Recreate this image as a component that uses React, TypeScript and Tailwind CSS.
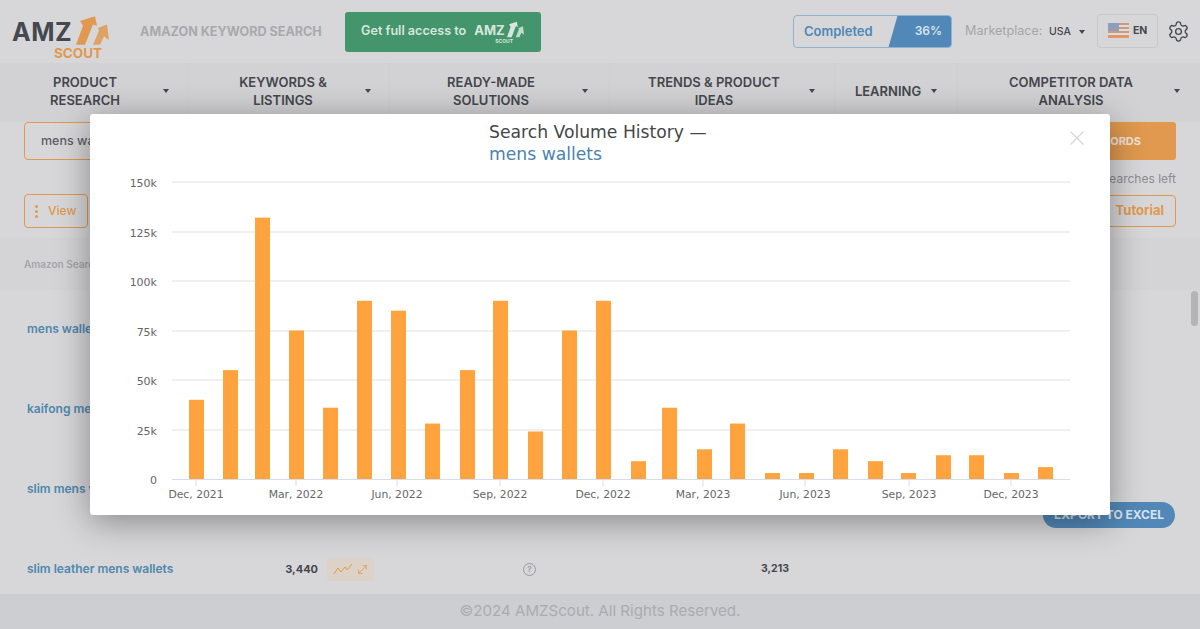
import { MoveDiagonal, Settings, X } from 'lucide-react';

type NavItem = {
  lines: string[];
  cell: string;
  text: string;
  caretGap: string;
};

const navItems: NavItem[] = [
  { lines: ['PRODUCT', 'RESEARCH'], cell: 'w-[189px]', text: 'ml-[15px] w-[140px]', caretGap: 'mr-[19px]' },
  { lines: ['KEYWORDS &', 'LISTINGS'], cell: 'w-[201px]', text: 'ml-[24px] w-[140px]', caretGap: 'mr-[18px]' },
  { lines: ['READY-MADE', 'SOLUTIONS'], cell: 'w-[220px]', text: 'ml-[31px] w-[140px]', caretGap: 'mr-[21px]' },
  { lines: ['TRENDS & PRODUCT', 'IDEAS'], cell: 'w-[225px]', text: 'ml-[34px] w-[140px]', caretGap: 'mr-[19px]' },
  { lines: ['LEARNING'], cell: 'w-[123px]', text: 'ml-[18px] w-[70px]', caretGap: 'mr-[20px]' },
  { lines: ['COMPETITOR DATA', 'ANALYSIS'], cell: 'w-[242px]', text: 'ml-[43px] w-[140px]', caretGap: 'mr-[20px]' },
];

const rows = ['mens wallets', 'kaifong mens wallets', 'slim mens wallets'];

const bars = [
  [189, 40], [223, 55], [255, 132], [289, 75], [323, 36], [357, 90], [391, 85], [425, 28], [460, 55],
  [493, 90], [528, 24], [562, 75], [596, 90], [631, 9], [662, 36], [697, 15], [730, 28], [765, 3],
  [799, 3], [833, 15], [868, 9], [901, 3], [936, 12], [969, 12], [1004, 3], [1038, 6],
];

const yLabels = [
  [182, '150k'], [232, '125k'], [281, '100k'], [331, '75k'], [380, '50k'], [430, '25k'], [479, '0'],
] as const;

const xLabels = [
  [196, 'Dec, 2021'], [296, 'Mar, 2022'], [397, 'Jun, 2022'], [500, 'Sep, 2022'], [603, 'Dec, 2022'],
  [703, 'Mar, 2023'], [805, 'Jun, 2023'], [909, 'Sep, 2023'], [1011, 'Dec, 2023'],
] as const;

const Caret = ({ className = '' }: { className?: string }) => (
  <span className={`h-0 w-0 border-x-[3px] border-t-[4px] border-x-transparent border-t-[#45474c] ${className}`} />
);

const Arrows = ({ className }: { className: string }) => (
  <svg viewBox="0 0 33 26" preserveAspectRatio="none" className={className} fill="currentColor">
    <path d="M0 25 L7 9 L4 5 L19 1 L21 9 L17 8 L9 25 Z" />
    <path d="M17 25 L23 13 L22 11 L31 8 L33 21 L28 18 L24 25 Z" opacity="0.85" />
  </svg>
);

const Flag = () => (
  <svg viewBox="0 0 21 15" className="h-[15px] w-[21px]">
    <rect width="21" height="15" fill="#dcdcde" />
    <rect y="0" width="21" height="2" fill="#cf9a7c" />
    <rect y="4" width="21" height="2" fill="#cf9a7c" />
    <rect y="8" width="21" height="2" fill="#cf9a7c" />
    <rect y="12" width="21" height="3" fill="#dd9a66" />
    <rect width="11" height="8" fill="#8d9fbb" />
  </svg>
);

const Chart = () => (
  <svg viewBox="90 165 1020 350" className="block h-[350px] w-[1020px]" style={{ fontFamily: '"DejaVu Sans", sans-serif' }}>
    {yLabels.slice(0, 6).map(([y]) => (
      <line key={y} x1="172" x2="1070" y1={y} y2={y} stroke="#ebebeb" strokeWidth="1.5" />
    ))}
    {bars.map(([x, value]) => (
      <rect key={x} x={x} y={479 - value * 1.98} width="15" height={value * 1.98} fill="#ffa33f" />
    ))}
    <line x1="172" x2="1070" y1="479.5" y2="479.5" stroke="#d5dcec" strokeWidth="1" />
    {yLabels.map(([y, label]) => (
      <text key={label} x="157" y={y + 5} textAnchor="end" fontSize="11" fill="#666666">
        {label}
      </text>
    ))}
    {xLabels.map(([x, label]) => (
      <g key={label}>
        <line x1={x} x2={x} y1="480" y2="486" stroke="#d5dcec" />
        <text x={x} y="498" textAnchor="middle" fontSize="10.8" fill="#666666">
          {label}
        </text>
      </g>
    ))}
  </svg>
);

export default function App() {
  return (
    <div className="relative h-[629px] w-[1200px] overflow-hidden bg-[#d7d7da] font-['Inter',sans-serif] text-[#45474c]">
      {/* Top bar */}
      <header className="flex h-[63px] items-center">
        <div className="relative ml-[12px] h-[50px] w-[100px] shrink-0">
          <span className="absolute left-0 top-[12px] text-[25px] leading-[26px] font-bold tracking-[0.5px] text-[#45484f]">AMZ</span>
          <span className="absolute left-[42px] top-[38px] text-[13.5px] leading-[16px] font-bold text-[#e0994e]">SCOUT</span>
          <Arrows className="absolute left-[64px] top-[8px] h-[31px] w-[33px] text-[#e0994e]" />
        </div>
        <span className="ml-[28px] w-[184px] shrink-0 pt-[2px] text-[12.6px] font-bold whitespace-nowrap text-[#a9a9ac]">AMAZON KEYWORD SEARCH</span>
        <div className="ml-[21px] flex h-[40px] w-[196px] shrink-0 items-center gap-[8px] rounded-[3px] bg-[#44956c] pl-[16px] text-[12.6px] font-semibold whitespace-nowrap text-[#d8e6dd]">
          Get full access to
          <span className="relative flex h-[26px] items-start">
            <span className="text-[13px] leading-[22px] font-bold">AMZ</span>
            <Arrows className="ml-[2px] mt-[2px] h-[17px] w-[17px]" />
            <span className="absolute left-[21px] top-[19px] text-[5px] leading-[6px] font-bold">SCOUT</span>
          </span>
        </div>
        <div className="ml-[252px] flex h-[33px] w-[159px] shrink-0 overflow-hidden rounded-[4px] border-[1.5px] border-[#8fb2d0]">
          <span className="flex-1 pl-[10px] text-[13px] leading-[30px] font-semibold text-[#4f87b5]">Completed</span>
          <span className="-my-[2px] -mr-[2px] w-[65px] bg-[#5288b7] pr-[11px] text-right text-[12px] leading-[33px] font-semibold text-[#d7e3ee] [clip-path:polygon(10px_0,100%_0,100%_100%,0_100%)]">36%</span>
        </div>
        <span className="ml-[13px] w-[84px] shrink-0 text-[12.6px] whitespace-nowrap text-[#a5a5a8]">Marketplace:</span>
        <span className="text-[10.5px] font-medium">USA</span>
        <Caret className="ml-[8px]" />
        <div className="ml-[12px] -mt-[2px] flex h-[34px] w-[61px] shrink-0 items-center gap-[4px] rounded-[4px] border border-[#c8c8cb] pl-[10px]">
          <Flag />
          <span className="text-[10.5px] font-bold">EN</span>
        </div>
        <Settings className="ml-[9px] h-[23px] w-[23px] shrink-0 text-[#45474c]" strokeWidth={1.4} />
      </header>

      {/* Main navigation */}
      <nav className="flex h-[59px] bg-[#d2d2d5] pb-[4px]">
        {navItems.map((item) => (
          <div key={item.lines[0]} className={`flex h-full items-center border-r border-[#cfcfd2] last:border-r-0 ${item.cell}`}>
            <div className={`shrink-0 text-center text-[13px] leading-[18px] font-semibold ${item.text}`}>
              {item.lines.map((line) => (
                <div key={line}>{line}</div>
              ))}
            </div>
            <Caret className={`ml-auto ${item.caretGap}`} />
          </div>
        ))}
      </nav>

      {/* Search row, mostly hidden by the dialog */}
      <div className="flex items-center justify-between px-[24px]">
        <div className="flex h-[38px] w-[400px] items-center rounded-[4px] border border-[#e0994e] pl-[16px] text-[12.5px] font-medium text-[#5c5e63]">mens wallets</div>
        <div className="flex h-[38px] w-[140px] items-center justify-end rounded-[3px] bg-[#e0994e] pr-[35px] text-[11px] font-bold text-[#efe4d7]">KEYWORDS</div>
      </div>
      <div className="mt-[11px] pr-[24px] text-right text-[12px] leading-[16px] text-[#8b8c90]">20 searches left</div>

      <div className="mt-[7px] flex items-center justify-between px-[24px]">
        <div className="flex h-[34px] w-[64px] items-center gap-[10px] rounded-[4px] border border-[#e0994e] pl-[10px] text-[12px] font-medium text-[#e0994e]">
          <span className="flex flex-col gap-[2px]">
            <span className="h-[3px] w-[3px] rounded-full bg-[#e0994e]" />
            <span className="h-[3px] w-[3px] rounded-full bg-[#e0994e]" />
            <span className="h-[3px] w-[3px] rounded-full bg-[#e0994e]" />
          </span>
          View
        </div>
        <div className="flex h-[32px] w-[130px] items-center justify-end rounded-[4px] border border-[#e0994e] pr-[11px] text-[13px] font-bold text-[#e0994e]">Tutorial</div>
      </div>

      {/* Table */}
      <div className="mt-[10px] flex h-[52px] items-center bg-[#d4d4d7] pl-[24px] text-[10px] font-semibold text-[#a5a5a8]">Amazon Search Keywords</div>
      <div className="-mt-[1px]">
        {rows.map((keyword) => (
          <div key={keyword} className="flex h-[80px] items-center pl-[27px] text-[12px] font-semibold text-[#4f87ad]">
            {keyword}
          </div>
        ))}
        <div className="flex h-[65px] items-center pl-[27px] pt-[15px] text-[12px] font-semibold text-[#4f87ad]">
          <span className="w-[220px] shrink-0 whitespace-nowrap">slim leather mens wallets</span>
          <span className="w-[71px] shrink-0 text-right text-[11px] font-bold text-[#45474c]">3,440</span>
          <span className="ml-[9px] flex h-[23px] w-[47px] shrink-0 items-center justify-center gap-[3px] rounded-[2px] bg-[#dcd2c8] text-[#e0994e]">
            <svg viewBox="0 0 20 12" className="h-[12px] w-[20px]" fill="none" stroke="currentColor" strokeWidth="1">
              <path d="M1 11 L5 5 L8 9 L12 4 L14 7 L19 1" />
            </svg>
            <MoveDiagonal className="h-[13px] w-[13px]" strokeWidth={1.5} />
          </span>
          <span className="ml-[149px] flex h-[13px] w-[13px] shrink-0 items-center justify-center rounded-full border border-[#9a9b9e] text-[8px] text-[#9a9b9e]">?</span>
          <span className="ml-[225px] shrink-0 text-[10.5px] font-bold text-[#45474c]">3,213</span>
        </div>
      </div>

      <footer className="flex h-[35px] items-center justify-center bg-[#cdced1] text-[15.1px] text-[#ababae]">©2024 AMZScout. All Rights Reserved.</footer>

      {/* Floating export button and scrollbar */}
      <div className="absolute left-[1043px] top-[502px] flex h-[26px] w-[132px] items-center justify-center rounded-full bg-[#5288b7] text-[12px] font-bold text-[#d7e3ee]">EXPORT TO EXCEL</div>
      <div className="absolute left-[1191px] top-[291px] h-[35px] w-[7px] rounded-full bg-[#b4b4b7]" />

      {/* Search volume dialog */}
      <div className="absolute left-[90px] top-[114px] h-[401px] w-[1020px] rounded-[3px] bg-white shadow-[0_6px_34px_rgba(0,0,0,0.38)]">
        <X className="absolute right-[21px] top-[12px] h-[24px] w-[24px] text-[#d6d6d6]" strokeWidth={1.2} />
        <div className="mx-auto h-[51px] w-[222px] pt-[7px] font-['DejaVu_Sans',sans-serif] text-[17.2px] leading-[22px] whitespace-nowrap text-[#444649]">
          <div>Search Volume History —</div>
          <div className="text-[#4a82b0]">mens wallets</div>
        </div>
        <Chart />
      </div>
    </div>
  );
}
